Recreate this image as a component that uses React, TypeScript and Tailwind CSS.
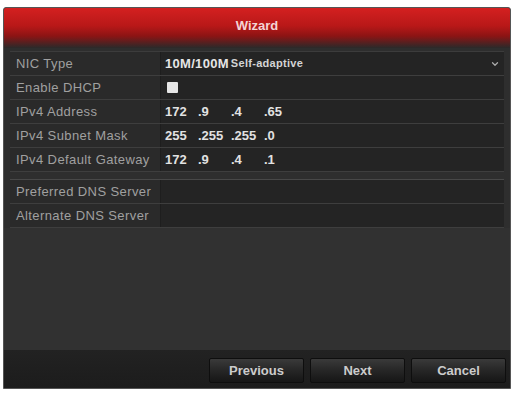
import { ChevronDown } from "lucide-react";

const font = { fontFamily: '"Liberation Sans", Arial, sans-serif' };

function Octets({ parts }: { parts: string[] }) {
  return (
    <div className="flex items-center text-[13px] font-bold text-[#e2e2e2]">
      {parts.map((p, i) => (
        <span key={i} className="w-[33px]">{i === 0 ? p : "." + p}</span>
      ))}
    </div>
  );
}

export default function App() {
  const rows = [
    { label: "IPv4 Address", value: ["172", "9", "4", "65"] },
    { label: "IPv4 Subnet Mask", value: ["255", "255", "255", "0"] },
    { label: "IPv4 Default Gateway", value: ["172", "9", "4", "1"] },
  ];

  const label = "w-[151px] bg-[#2a2a2a] flex items-center pl-[6px] text-[13px] tracking-[0.4px] text-[#a0a0a0] border-r border-[#1e1e1e] whitespace-nowrap";

  return (
    <div className="w-[514px] h-[393px] bg-white pt-[7px] pl-[3px]" style={font}>
      <div className="w-[508px] h-[382px] flex flex-col bg-[#2e2e2e] border border-[#555] rounded-t-[3px] overflow-hidden">
        {/* header */}
        <div className="h-[40px] shrink-0 flex items-start justify-center pt-[8px] bg-[linear-gradient(to_bottom,#d42020_0%,#b81818_45%,#8c1414_70%,#2a2a2a_100%)]">
          <span className="text-[13px] font-bold text-[#f4d4d4]">Wizard</span>
        </div>

        {/* form */}
        <div className="flex flex-col px-[6px] pt-[3px]">
          <div className="flex flex-col border-t border-[#3c3c3c]">
            <div className="flex h-[24px] border-b border-[#3e3e3e]">
              <div className={label}>NIC Type</div>
              <div className="flex-1 bg-[#242424] flex items-center pl-[4px] pr-[4px]">
                <span className="text-[13px] font-bold tracking-[0.3px] text-[#e6e6e6]">10M/100M</span>
                <span className="text-[11px] font-bold tracking-[0.3px] text-[#d4d4d4] ml-[2px]">Self-adaptive</span>
                <ChevronDown size={10} strokeWidth={3} className="ml-auto text-[#aaa]" />
              </div>
            </div>
            <div className="flex h-[24px] border-b border-[#3e3e3e]">
              <div className={label}>Enable DHCP</div>
              <div className="flex-1 bg-[#242424] flex items-center pl-[6px]">
                <div className="w-[11px] h-[11px] bg-[#e6e6e6] rounded-[1px]" />
              </div>
            </div>
            {rows.map((r) => (
              <div key={r.label} className="flex h-[24px] border-b border-[#3e3e3e]">
                <div className={label}>{r.label}</div>
                <div className="flex-1 bg-[#242424] flex items-center pl-[4px]">
                  <Octets parts={r.value} />
                </div>
              </div>
            ))}
          </div>

          <div className="flex flex-col mt-[7px] border-t border-[#484848]">
            {["Preferred DNS Server", "Alternate DNS Server"].map((l) => (
              <div key={l} className="flex h-[24px] border-b border-[#3e3e3e]">
                <div className={label}>{l}</div>
                <div className="flex-1 bg-[#242424]" />
              </div>
            ))}
          </div>
        </div>

        <div className="flex-1 bg-[#313131]" />

        {/* footer */}
        <div className="h-[38px] shrink-0 flex items-start pt-[8px] justify-end gap-[6px] pr-[4px] bg-[linear-gradient(to_bottom,#222_0%,#1c1c1c_100%)]">
          {["Previous", "Next", "Cancel"].map((b) => (
            <button
              key={b}
              className="w-[95px] h-[25px] rounded-[2px] border border-[#0e0e0e] bg-[linear-gradient(to_bottom,#3a3a3a_0%,#262626_50%,#161616_100%)] text-[13px] font-bold text-[#cccccc]"
            >
              {b}
            </button>
          ))}
        </div>
      </div>
    </div>
  );
}
